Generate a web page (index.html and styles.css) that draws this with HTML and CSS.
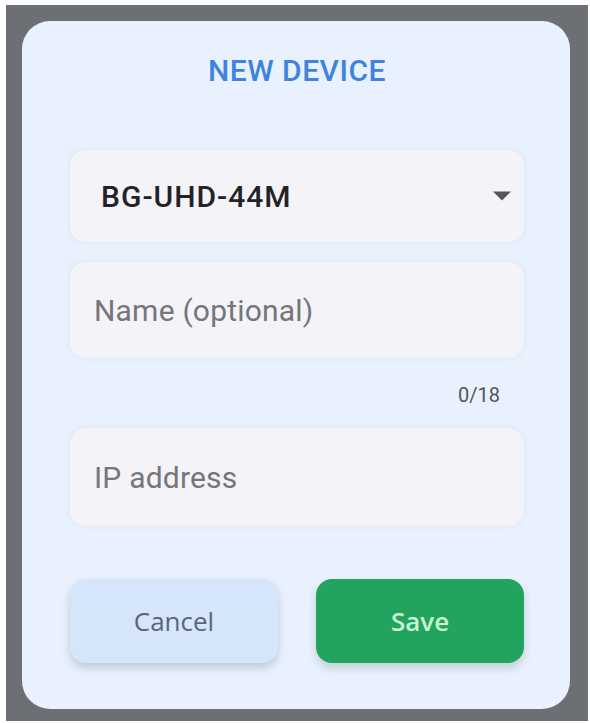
FILE: index.html
```html
<!DOCTYPE html>
<html lang="en">
<head>
<meta charset="utf-8">
<title>New device</title>
<link rel="stylesheet" href="styles.css">
</head>
<body>
<div class="frame">
  <div class="card">
    <h1 class="title">NEW DEVICE</h1>
    <div class="field select">
      <span class="select-value">BG-UHD-44M</span>
      <svg class="caret" width="20" height="10" viewBox="0 0 20 10" aria-hidden="true"><path d="M1 0.5 H19 L10 9.5 Z" fill="#555559"/></svg>
    </div>
    <div class="field input">
      <span class="placeholder">Name (optional)</span>
    </div>
    <div class="counter">0/18</div>
    <div class="field input ip">
      <span class="placeholder">IP address</span>
    </div>
    <div class="actions">
      <button class="btn cancel" type="button">Cancel</button>
      <button class="btn save" type="button">Save</button>
    </div>
  </div>
</div>
</body>
</html>
```

FILE: styles.css
```css
html, body {
  margin: 0;
  padding: 0;
  background: #ffffff;
}

body {
  font-family: Roboto, "Liberation Sans", sans-serif;
}

.frame {
  margin: 5px 2px 2px 6px;
  height: 716px;
  box-sizing: border-box;
  padding: 16px 18px 12px 16px;
  background: #6c6f73;
}

.card {
  height: 688px;
  box-sizing: border-box;
  padding: 35px 46px 0 48px;
  background: #e8f1fd;
  border-radius: 28px;
  display: flex;
  flex-direction: column;
}

.title {
  margin: 0;
  height: 30px;
  line-height: 30px;
  font-size: 30px;
  font-weight: 500;
  text-align: center;
  color: #3f83e0;
  letter-spacing: 0.5px;
}

.field {
  display: flex;
  align-items: center;
  box-sizing: border-box;
  background: #f3f3f8;
  border-radius: 16px;
  box-shadow: 0 0 5px rgba(200, 210, 225, 0.35);
}

.select {
  margin-top: 64px;
  height: 92px;
  padding: 0 12px 0 31px;
  justify-content: space-between;
}

.select-value {
  font-size: 30px;
  font-weight: 500;
  color: #232327;
  letter-spacing: 1px;
}

.caret {
  display: block;
}

.input {
  margin-top: 20px;
  height: 96px;
  padding: 0 24px 0 24px;
}

.placeholder {
  font-size: 30px;
  color: #75757b;
  letter-spacing: 0.2px;
}

.counter {
  margin-top: 27px;
  height: 20px;
  line-height: 20px;
  padding-right: 24px;
  text-align: right;
  font-size: 20px;
  color: #55565b;
}

.ip {
  margin-top: 23px;
  height: 98px;
}

.actions {
  margin-top: 53px;
  display: grid;
  grid-template-columns: 208px 208px;
  justify-content: space-between;
}

.btn {
  height: 84px;
  border: none;
  border-radius: 16px;
  font-family: "Open Sans", "Noto Sans", sans-serif;
  font-size: 26px;
  cursor: pointer;
}

.cancel {
  background: #d5e5fa;
  color: #5b6578;
  box-shadow: 0 5px 9px rgba(60, 70, 90, 0.22);
}

.save {
  background: #22a35e;
  color: #c6f5d6;
  font-weight: 600;
  box-shadow: 0 5px 9px rgba(40, 80, 60, 0.2);
}
```
